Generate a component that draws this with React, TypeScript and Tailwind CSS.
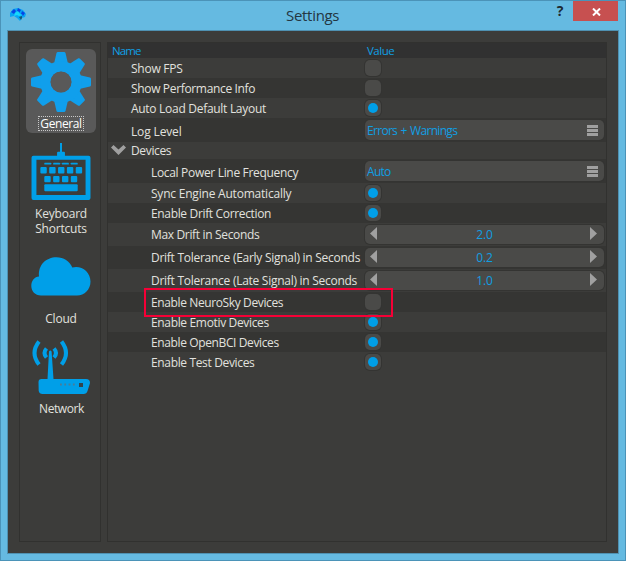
import React from "react";

type Kind = "check" | "select" | "spin" | "group";

interface Row {
  label: string;
  kind: Kind;
  height: string;
  tracking: string;
  value?: string;
  on?: boolean;
  child?: boolean;
}

const rows: Row[] = [
  { label: "Show FPS", kind: "check", height: "h-5", tracking: "tracking-[-0.25px]" },
  { label: "Show Performance Info", kind: "check", height: "h-5", tracking: "tracking-[-0.34px]" },
  { label: "Auto Load Default Layout", kind: "check", height: "h-5", on: true, tracking: "tracking-[-0.29px]" },
  { label: "Log Level", kind: "select", height: "h-6", value: "Errors + Warnings", tracking: "tracking-[-0.15px]" },
  { label: "Devices", kind: "group", height: "h-[17px]", tracking: "tracking-[-0.35px]" },
  { label: "Local Power Line Frequency", kind: "select", height: "h-6", value: "Auto", child: true, tracking: "tracking-[-0.32px]" },
  { label: "Sync Engine Automatically", kind: "check", height: "h-5", on: true, child: true, tracking: "tracking-[-0.21px]" },
  { label: "Enable Drift Correction", kind: "check", height: "h-5", on: true, child: true, tracking: "tracking-[-0.34px]" },
  { label: "Max Drift in Seconds", kind: "spin", height: "h-[23px]", value: "2.0", child: true, tracking: "tracking-[-0.34px]" },
  { label: "Drift Tolerance (Early Signal) in Seconds", kind: "spin", height: "h-[23px]", value: "0.2", child: true, tracking: "tracking-[-0.27px]" },
  { label: "Drift Tolerance (Late Signal) in Seconds", kind: "spin", height: "h-[23px]", value: "1.0", child: true, tracking: "tracking-[-0.27px]" },
  { label: "Enable NeuroSky Devices", kind: "check", height: "h-5", child: true, tracking: "tracking-[-0.38px]" },
  { label: "Enable Emotiv Devices", kind: "check", height: "h-5", on: true, child: true, tracking: "tracking-[-0.34px]" },
  { label: "Enable OpenBCI Devices", kind: "check", height: "h-5", on: true, child: true, tracking: "tracking-[-0.38px]" },
  { label: "Enable Test Devices", kind: "check", height: "h-5", on: true, child: true, tracking: "tracking-[-0.35px]" },
];

function Check({ on }: { on?: boolean }) {
  return (
    <div className="flex size-4 items-center justify-center rounded-[5px] bg-[#4a4a48] shadow-[0_0_0_1px_#343432]">
      {on && <div className="size-[10px] rounded-full bg-[#009fe8]" />}
    </div>
  );
}

function Value({ row }: { row: Row }) {
  if (row.kind === "check") return <Check on={row.on} />;
  if (row.kind === "select")
    return (
      <div className="flex h-5 w-[239px] items-center justify-between rounded-[5px] bg-[#4a4a48] pr-[6px] pl-[2px] text-[#109fe3] shadow-[0_0_0_1px_#343432]">
        <span className="pt-px text-[12px] tracking-[-0.7px] [word-spacing:1px]">{row.value}</span>
        <div className="flex flex-col gap-px pt-px">
          <div className="h-[3px] w-[11px] bg-[#a0a0a0]" />
          <div className="h-[3px] w-[11px] bg-[#a0a0a0]" />
          <div className="h-[3px] w-[11px] bg-[#a0a0a0]" />
        </div>
      </div>
    );
  if (row.kind === "spin")
    return (
      <div className="flex h-[19px] w-[239px] items-center justify-between rounded-[5px] bg-[#4a4a48] pr-[7px] pl-[5px] text-[#109fe3] shadow-[0_0_0_1px_#343432]">
        <svg className="mb-[2px]" width="7" height="13" viewBox="0 0 7 13">
          <path d="M7 0v13L0 6.5z" fill="#a0a0a0" />
        </svg>
        <span className="pl-[2px] tracking-[-0.1px]">{row.value}</span>
        <svg className="mb-[2px]" width="7" height="13" viewBox="0 0 7 13">
          <path d="M0 0v13l7-6.5z" fill="#a0a0a0" />
        </svg>
      </div>
    );
  return null;
}

function SettingRow({ row, index }: { row: Row; index: number }) {
  return (
    <div className={`flex shrink-0 items-center ${row.height} ${index % 2 ? "bg-[#353533]" : "bg-[#3c3c3a]"}`}>
      <div className={`flex w-[257px] shrink-0 items-center whitespace-nowrap ${row.child ? "pl-[43px]" : row.kind === "group" ? "pl-[3px]" : "pl-[23px]"}`}>
        {row.kind === "group" && (
          <svg className="mr-[5px] mb-px" width="15" height="10" viewBox="0 0 15 10">
            <path d="M0 2.500 2.500 0l5 4.500 5-4.500L15 2.500 7.500 10z" fill="#a0a0a0" />
          </svg>
        )}
        <span className={`${row.tracking} ${row.kind === "select" ? "pt-[2px]" : row.kind === "check" ? "pt-px" : "pt-0"}`}>{row.label}</span>
      </div>
      <Value row={row} />
    </div>
  );
}

function GearIcon() {
  return (
    <svg width="60" height="60" viewBox="0 0 60 60" className="shrink-0">
      <g fill="#109fec">
        {[0, 45, 90, 135, 180, 225, 270, 315].map((a) => (
          <path key={a} d="M22.500 14 25.500 1q.3-1 1.500-1h6q1.200 0 1.500 1l3 13z" transform={`rotate(${a} 30 30)`} />
        ))}
      </g>
      <circle cx="30" cy="30" r="15.500" fill="none" stroke="#109fec" strokeWidth="10.500" />
      <circle cx="30" cy="30" r="10.500" fill="#595959" />
    </svg>
  );
}

function KeyboardIcon() {
  return (
    <svg width="60" height="58" viewBox="0 0 60 58" fill="#009fe8">
      <path d="M29 0h2v9h2q1 0 1 1v4h-8v-4q0-1 1-1h2z" />
      <path fillRule="evenodd" d="M2 13h56q2 0 2 2v41q0 2-2 2H2q-2 0-2-2V15q0-2 2-2zm3 4v36h50V17z" />
      {[13, 22, 31, 40].map((x) => (
        <rect key={x} x={x} y="20" width="7" height="2" rx=".5" />
      ))}
      {[9, 18, 27, 36, 45].map((x) => (
        <rect key={x} x={x} y="24.500" width="6.500" height="6.500" rx="1" />
      ))}
      {[13, 22, 31, 40].map((x) => (
        <rect key={x} x={x} y="33.500" width="6.500" height="6.500" rx="1" />
      ))}
      <rect x="13" y="42" width="34" height="7" rx="1" />
    </svg>
  );
}

function CloudIcon() {
  return (
    <svg width="60" height="39" viewBox="0 0 60 39" fill="#009fe8">
      <path d="M10 38.500C4 38.500.3 34 .3 29c0-5.500 3.300-9.300 7.700-9.500C7 8 15 .3 25.500.3c7 0 13.200 4 15.800 10.200C50 8 59.500 14.500 59.500 24.500c0 8-6 14-13.500 14z" />
    </svg>
  );
}

function RouterIcon() {
  return (
    <svg width="58" height="54" viewBox="0 0 58 54">
      <g fill="none" stroke="#009fe8" strokeWidth="4">
        <path d="M7 1.500Q-2 13 7 24.500" />
        <path d="M14.500 8.500q-4 4.500 0 9" />
        <path d="M22 8.500q4 4.500 0 9" />
        <path d="M29.500 1.500q9 11.500 0 23" />
      </g>
      <path fill="#009fe8" d="M17 11.500q1.300-2 2.600 0L21.500 39H54q4 0 4 4l-2.500 8q-.8 3-4 3h-41q-3.200 0-3.800-3L6.500 42q0-3 3-3h6z" />
      <path d="M28 44.500h16" stroke="#4b7d96" strokeWidth="2" strokeDasharray="1.800 2.500" />
      <rect x="47" y="43" width="4" height="4" fill="#33444b" />
    </svg>
  );
}

export default function App() {
  return (
    <div className="relative flex h-[561px] w-[626px] flex-col border border-[#4b93b8] bg-[#65bae1] px-[6px] pb-[6px] font-['Open_Sans','Noto_Sans',sans-serif] text-[12px] leading-[15px] text-[#e1e1df]">
      <header className="flex h-[29px] shrink-0 items-start">
        <svg className="mt-[7px] ml-[3px]" width="16" height="13" viewBox="0 0 16 13">
          <path d="M0 5 3 1l5-1 5 2 3 4-1 3-3 1-2 3-3-3-3-2-4 1z" fill="#08a5f4" />
          <path d="m1 4 3-3 2 2-2 3zm7-4 3 2-2 3-2-2zm4 3 3 2-2 3-2-2z" fill="#0645e6" />
          <path d="m5 5 3-2 2 3 3 1-4 1-2-1-3 1z" fill="#18d8fb" />
          <path d="m9 9 3-1v2l-1 2z" fill="#155a78" />
        </svg>
        <h1 className="ml-[260px] w-[70px] pt-[4px] text-[15px] leading-[21px] font-normal tracking-[-0.3px] whitespace-nowrap text-[#243642]">Settings</h1>
        <span className="ml-[191px] w-[26px] pt-px text-center text-[14px] leading-[18px] font-bold text-[#1d2930]">?</span>
        <div className="flex h-5 w-[45px] items-center justify-center bg-[#c75050]">
          <svg className="mt-[2px] ml-px" width="9" height="8" viewBox="0 0 9 8">
            <path d="m1 .5 7 7m0-7-7 7" stroke="white" strokeWidth="2" />
          </svg>
        </div>
      </header>
      <main className="flex min-h-0 flex-1 gap-[6px] border border-[#4f91b1] bg-[#3c3c3a] p-[11px]">
        <nav className="flex w-[82px] shrink-0 flex-col items-center border border-[#31312f] pl-[2px] text-center tracking-[-0.2px]">
          <div className="mt-[6px] flex h-[84px] w-[70px] shrink-0 flex-col items-center rounded-[6px] bg-[#595959] pt-[3px]">
            <GearIcon />
            <span className="mt-[4px] h-[15px] w-[46px] border border-dotted border-[#c8c8c8] leading-[14px] tracking-[-0.4px] text-white">General</span>
          </div>
          <div className="mt-[10px] flex h-[93px] shrink-0 flex-col items-center">
            <KeyboardIcon />
            <span className="mt-[6px] leading-[15px]">Keyboard<br />Shortcuts</span>
          </div>
          <div className="mt-[21px] flex h-[70px] shrink-0 flex-col items-center">
            <CloudIcon />
            <span className="mt-[15px]">Cloud</span>
          </div>
          <div className="mt-[13px] flex shrink-0 flex-col items-center">
            <RouterIcon />
            <span className="mt-[7px] pl-px tracking-[-0.4px]">Network</span>
          </div>
        </nav>
        <section className="flex w-[500px] flex-col border border-[#31312f]">
          <div className="flex h-[15px] shrink-0 items-center bg-[#313131] text-[11.500px] text-[#109fe3]">
            <span className="w-[259px] pl-[4px] tracking-[-0.9px]">Name</span>
            <span className="tracking-[-0.5px]">Value</span>
          </div>
          {rows.map((row, i) => (
            <SettingRow key={row.label} row={row} index={i} />
          ))}
        </section>
      </main>
      <div className="pointer-events-none absolute top-[287px] left-[143px] h-[29px] w-[249px] border-2 border-[#f60036]" />
    </div>
  );
}
